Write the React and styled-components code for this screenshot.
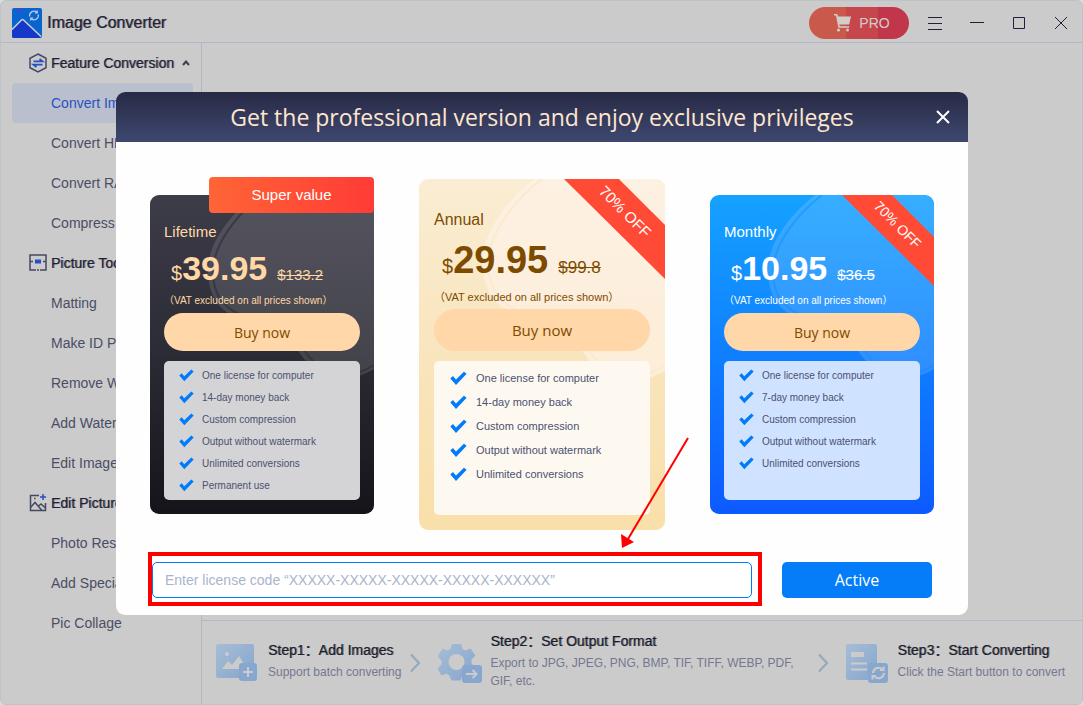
import styled, { createGlobalStyle } from "styled-components";

const GlobalStyle = createGlobalStyle`
  * {
    box-sizing: border-box;
  }

  body {
    margin: 0;
    background-color: #d9dde0;
    font-family: "Liberation Sans", Arial, "Noto Sans CJK SC", sans-serif;
  }

  button,
  input {
    font-family: inherit;
  }
`;

const menuGroups = [
  {
    title: "Feature Conversion",
    icon: "convert",
    open: true,
    items: ["Convert Image", "Convert HEIC", "Convert RAW", "Compress Image"],
  },
  {
    title: "Picture Tools",
    icon: "tools",
    items: [
      "Matting",
      "Make ID Photo",
      "Remove Watermark",
      "Add Watermark",
      "Edit Image",
    ],
  },
  {
    title: "Edit Picture",
    icon: "edit",
    items: ["Photo Restoration", "Add Special Effects", "Pic Collage"],
  },
];

const plans = [
  {
    name: "Lifetime",
    price: "39.95",
    oldPrice: "$133.2",
    tag: "Super value",
    color: "#ffd8a6",
    background: "linear-gradient(#3d3c49, #2b2b35 50%, #15141a)",
    panel: "#d4d4d6",
    shape: "rgba(255, 255, 255, 0.12)",
    line: "rgba(48, 48, 60, 0.7)",
    features: [
      "One license for computer",
      "14-day money back",
      "Custom compression",
      "Output without watermark",
      "Unlimited conversions",
      "Permanent use",
    ],
  },
  {
    name: "Annual",
    price: "29.95",
    oldPrice: "$99.8",
    off: "70% OFF",
    large: true,
    color: "#7d4b00",
    background: "linear-gradient(#faedd3, #f9e5bd 50%, #f9dfa9)",
    panel: "#fef9f0",
    shape: "rgba(255, 244, 236, 0.6)",
    line: "#faebd0",
    features: [
      "One license for computer",
      "14-day money back",
      "Custom compression",
      "Output without watermark",
      "Unlimited conversions",
    ],
  },
  {
    name: "Monthly",
    price: "10.95",
    oldPrice: "$36.5",
    off: "70% OFF",
    color: "#ffffff",
    background: "linear-gradient(#15a2ff, #0f7fff 50%, #0d5aff)",
    panel: "#cfe2ff",
    shape: "rgba(255, 255, 255, 0.14)",
    line: "rgba(20, 140, 255, 0.5)",
    features: [
      "One license for computer",
      "7-day money back",
      "Custom compression",
      "Output without watermark",
      "Unlimited conversions",
    ],
  },
];

// 왼쪽 위 로고
function Logo() {
  return (
    <svg width="30" height="30" viewBox="0 0 30 30">
      <rect width="30" height="30" rx="2" fill="#0865d0" />
      <path d="M2 0h11L7.5 5.5z" fill="#2a55c8" />
      <path d="M0 22.5 11 11.5 29 29 28 30H2a2 2 0 0 1-2-2z" fill="#1638c8" />
      <path
        d="M0 21.5 9.5 12a1.5 1.5 0 0 1 2 0L29 28.5"
        fill="none"
        stroke="#cbd0d8"
        strokeWidth="1.5"
      />
      <path
        d="M17.7 8.5a4.3 4.3 0 0 1 7-4.2M26.3 6.5a4.3 4.3 0 0 1-7 4.2M25.3 2.5v2.5h-2.5M18.7 12.5V10h2.5"
        fill="none"
        stroke="#b9cbe4"
        strokeWidth="1.2"
      />
    </svg>
  );
}

function GroupIcon({ name }) {
  return (
    <svg
      width="18"
      height="20"
      viewBox="0 0 18 20"
      fill="none"
      stroke="#454963"
      strokeWidth="1.5"
    >
      {name === "convert" && (
        <>
          <path d="M9 1 17 5.3v9.4L9 19l-8-4.3V5.3z" />
          <path d="M4.5 8.3h9L10.5 6M13.5 11.7h-9L7.5 14" stroke="#2350c4" strokeWidth="1.8" />
        </>
      )}
      {name === "tools" && (
        <>
          <path d="M7 17H1V2h16v15h-6M8 17h2M1 8.5h3M14 8.5h3" />
          <path d="M6.7 7.2h4.6v2.6H6.7z" fill="#2350c4" stroke="#2350c4" />
        </>
      )}
      {name === "edit" && (
        <>
          <path d="M10 2.5H1.5v15h15V10" />
          <path d="M1.5 14.5 6 9.5l7 8M9.5 13l2.500-2 4.5 4" />
          <path d="M5 5.5h1.5" />
          <path d="M14 1v6M11 4h6" stroke="#2350c4" />
        </>
      )}
    </svg>
  );
}

function CartIcon() {
  return (
    <svg width="17" height="18" viewBox="0 0 17 18" fill="#d3cdca">
      <path d="M0 0h3.2l.8 2.5H17l-1.8 8H5.2l.5 1.7h9.5v1.5H4.4L2 1.5H0z" />
      <circle cx="4.5" cy="16" r="1.5" />
      <circle cx="13.5" cy="16" r="1.5" />
    </svg>
  );
}

function CheckIcon({ size }) {
  return (
    <svg width={size} height={size} viewBox="0 0 15 15">
      <path d="M.3 7.5 2.6 5.2 5.3 8.3 12.3 1.5 14.7 3.4 5.3 13.2z" fill="#007bfa" />
    </svg>
  );
}

// 하단 단계 아이콘
function StepIcon({ name }) {
  return (
    <svg width="44" height="42" viewBox="0 0 44 42">
      <defs>
        <linearGradient id={`step-${name}`} x1="0" x2="1" y1="0" y2="1">
          <stop offset="0" stopColor="#a7bdd5" />
          <stop offset="1" stopColor="#86a6cd" />
        </linearGradient>
      </defs>
      {name === "add" && (
        <>
          <rect y="2" width="38" height="34" rx="2" fill={`url(#step-${name})`} />
          <circle cx="11" cy="12" r="2" fill="#cbcbcb" />
          <path d="M6 27 12 19l4 4 7-9 8 13z" fill="#cbcbcb" />
          <rect x="23" y="21" width="18" height="18" rx="3" fill="#87a7cf" />
          <path d="M32 25v10M27 30h10" stroke="#cbcbcb" strokeWidth="2" />
        </>
      )}
      {name === "format" && (
        <>
          <path
            d="M14 2h9l1.5 5 3 1.5 5-2 5 7-4 4v4l4 4-5 8-5-2-3 2-2 5h-9l-2-5-3-2-5 2-4-7 4-4v-4l-4-4 5-8 5 2 3-1.5z"
            fill={`url(#step-${name})`}
          />
          <circle cx="18.5" cy="20" r="8" fill="#cbcbcb" />
          <rect x="24" y="23" width="20" height="18" rx="3" fill="#87a7cf" />
          <path
            d="M28 32h10M34.5 28l4 4-4 4"
            fill="none"
            stroke="#cbcbcb"
            strokeWidth="2"
          />
        </>
      )}
      {name === "start" && (
        <>
          <rect y="2" width="31" height="36" rx="2" fill={`url(#step-${name})`} />
          <path d="M5 10h13v5H5z" fill="#cbcbcb" />
          <path d="M5 21.5h16M5 27.5h16" stroke="#cbcbcb" strokeWidth="2" />
          <rect x="22" y="21" width="20" height="20" rx="3" fill="#87a7cf" />
          <path
            d="M27 31a5.5 5.5 0 0 1 9-4M38 31a5.5 5.5 0 0 1-9 4M37.5 24.5V28H34M26.5 37.5V34H30"
            fill="none"
            stroke="#cbcbcb"
            strokeWidth="2"
          />
        </>
      )}
    </svg>
  );
}

function StepArrow() {
  return (
    <svg width="10" height="20" viewBox="0 0 10 20">
      <path d="M1 1.5 9 10 1 18.5" fill="none" stroke="#93a8b8" strokeWidth="2" />
    </svg>
  );
}

function PlanCard({ plan }) {
  return (
    <StCard $large={plan.large} $background={plan.background} $color={plan.color}>
      <StCardShape viewBox="0 0 224 319" preserveAspectRatio="none">
        <path
          d="M105 0C80 20 58 48 58 75c0 22 8 38 26 46l55 27c10 6 14 17 25 26 18 14 40 12 60 0V12Q224 0 212 0z"
          fill={plan.shape}
        />
        <path
          d="M112 0C86 20 63 50 63 77c0 20 8 34 26 42l55 27c10 6 14 17 25 26 17 12 37 9 55-2"
          fill="none"
          stroke={plan.line}
          strokeWidth="2"
        />
      </StCardShape>
      {plan.tag && <StTag>{plan.tag}</StTag>}
      {plan.off && (
        <StRibbon $large={plan.large} viewBox="0 0 92 92">
          <path d="M0 0h50l42 42v49z" fill="#ff4a35" />
          <text x="56" y="34" textAnchor="middle" transform="rotate(45 55 29)">
            {plan.off}
          </text>
        </StRibbon>
      )}
      <StPlanName $large={plan.large}>{plan.name}</StPlanName>
      <StPriceRow $large={plan.large}>
        <span>$</span>
        <strong>{plan.price}</strong>
        <del>{plan.oldPrice}</del>
      </StPriceRow>
      <StVat $large={plan.large}>（VAT excluded on all prices shown）</StVat>
      <StBuyButton type="button" $large={plan.large}>
        Buy now
      </StBuyButton>
      <StFeatures $large={plan.large} $panel={plan.panel}>
        {plan.features.map((feature) => (
          <li key={feature}>
            <CheckIcon size={plan.large ? 17 : 15} />
            {feature}
          </li>
        ))}
      </StFeatures>
    </StCard>
  );
}

export default function App() {
  return (
    <>
      <GlobalStyle />
      <StWindow>
        <StTitleBar>
          <Logo />
          <StAppName>Image Converter</StAppName>
          <StProButton type="button">
            <CartIcon />
            PRO
          </StProButton>
          <StWindowButtons>
            <button type="button" aria-label="Menu">
              <svg width="14" height="14" viewBox="0 0 14 14">
                <path d="M0 1.5h14M0 7.5h14M0 13.5h14" />
              </svg>
            </button>
            <button type="button" aria-label="Minimize">
              <svg width="14" height="14" viewBox="0 0 14 14">
                <path d="M0 6.5h14" />
              </svg>
            </button>
            <button type="button" aria-label="Maximize">
              <svg width="14" height="14" viewBox="0 0 14 14">
                <path d="M1.5 1.5h11v11h-11z" />
              </svg>
            </button>
            <button type="button" aria-label="Close">
              <svg width="14" height="14" viewBox="0 0 14 14">
                <path d="M1 1l12 12M13 1 1 13" />
              </svg>
            </button>
          </StWindowButtons>
        </StTitleBar>
        <StBody>
          <StSidebar>
            {menuGroups.map((group) => (
              <div key={group.title}>
                <StGroupTitle>
                  <GroupIcon name={group.icon} />
                  {group.title}
                  {group.open && (
                    <StFoldMark width="8" height="6" viewBox="0 0 8 6">
                      <path d="M1 5 4 1.5 7 5" />
                    </StFoldMark>
                  )}
                </StGroupTitle>
                {group.items.map((item) => (
                  <StMenuItem href="#" key={item} $active={item === "Convert Image"}>
                    {item}
                  </StMenuItem>
                ))}
              </div>
            ))}
          </StSidebar>
          <StContent>
            <StSteps>
              <StepIcon name="add" />
              <StStepText>
                <h3>Step1：Add Images</h3>
                <p>Support batch converting</p>
              </StStepText>
              <StepArrow />
              <StepIcon name="format" />
              <StStepText $wrap>
                <h3>Step2：Set Output Format</h3>
                <p>Export to JPG, JPEG, PNG, BMP, TIF, TIFF, WEBP, PDF, GIF, etc.</p>
              </StStepText>
              <StepArrow />
              <StepIcon name="start" />
              <StStepText>
                <h3>Step3：Start Converting</h3>
                <p>Click the Start button to convert</p>
              </StStepText>
            </StSteps>
          </StContent>
        </StBody>
      </StWindow>

      <StOverlay>
        <StModal role="dialog" aria-labelledby="pro-title">
          <StModalHeader>
            <h2 id="pro-title">Get the professional version and enjoy exclusive privileges</h2>
            <StCloseButton type="button" aria-label="Close dialog">
              <svg width="14" height="14" viewBox="0 0 14 14">
                <path d="M1 1l12 12M13 1 1 13" stroke="#ffffff" strokeWidth="2" />
              </svg>
            </StCloseButton>
          </StModalHeader>
          <StPlans>
            {plans.map((plan) => (
              <PlanCard key={plan.name} plan={plan} />
            ))}
          </StPlans>
          <StLicenseForm onSubmit={(e) => e.preventDefault()}>
            <StLicenseBox>
              <input
                type="text"
                aria-label="License code"
                placeholder="Enter license code “XXXXX-XXXXX-XXXXX-XXXXX-XXXXXX”"
              />
            </StLicenseBox>
            <StActiveButton type="submit">Active</StActiveButton>
          </StLicenseForm>
          {/* 라이선스 입력칸을 가리키는 화살표 */}
          <StPointer width="70" height="112" viewBox="0 0 70 112">
            <path d="M68 1 8 102" stroke="#ff0000" strokeWidth="2" />
            <path d="M1 97 14 105 2 111z" fill="#ff0000" />
          </StPointer>
        </StModal>
      </StOverlay>
    </>
  );
}

const StWindow = styled.div`
  display: flex;
  flex-direction: column;
  min-height: 100vh;
  border: 1px solid #bcc3c9;
  border-radius: 6px;
  background-color: #cbcbcb;
`;

const StTitleBar = styled.header`
  display: flex;
  align-items: center;
  height: 42px;
  padding: 2px 0 0 11px;
  border-bottom: 1px solid #b4b5c6;
`;

const StAppName = styled.h1`
  margin: 0 auto 0 5px;
  color: #1f2033;
  font-size: 16px;
  font-weight: 400;
  text-shadow: 1px 0 rgba(31, 32, 51, 0.5);
`;

const StProButton = styled.button`
  display: flex;
  align-items: center;
  justify-content: center;
  gap: 8px;
  width: 100px;
  height: 32px;
  padding: 0 0 0 6px;
  border: none;
  border-radius: 16px;
  color: #d3cdca;
  font-size: 14px;
  background: linear-gradient(
    90deg,
    #c95a4b 37px,
    #c5464b 37px,
    #c5464b 69px,
    #c2364b 69px
  );
`;

const StWindowButtons = styled.div`
  display: flex;
  margin-left: 5px;

  button {
    display: flex;
    align-items: center;
    justify-content: center;
    width: 42px;
    height: 32px;
    padding: 0;
    border: none;
    background: none;
  }

  svg {
    fill: none;
    stroke: #1f2040;
  }
`;

const StBody = styled.div`
  display: flex;
  flex: 1;
`;

const StSidebar = styled.nav`
  width: 201px;
  padding: 0 8px 0 11px;
  border-right: 1px solid #b4b5c6;
`;

const StGroupTitle = styled.div`
  display: flex;
  align-items: center;
  gap: 4px;
  height: 40px;
  padding-left: 17px;
  color: #1f2033;
  font-size: 14px;
  white-space: nowrap;
  text-shadow: 1px 0 rgba(31, 32, 51, 0.5);
`;

const StFoldMark = styled.svg`
  margin-left: 4px;
  fill: none;
  stroke: #3c3f52;
  stroke-width: 2px;
`;

const StMenuItem = styled.a`
  display: block;
  padding-left: 39px;
  border-radius: 4px;
  color: ${(props) => (props.$active ? "#2a50c4" : "#4a4d66")};
  background-color: ${(props) => (props.$active ? "#b9bfcc" : "transparent")};
  font-size: 14px;
  line-height: 40px;
  text-decoration: none;
`;

const StContent = styled.main`
  display: flex;
  flex: 1;
  flex-direction: column;
  justify-content: flex-end;
`;

const StSteps = styled.footer`
  display: flex;
  align-items: center;
  height: 84px;
  padding: 0 17px 0 14px;
  border-top: 1px solid #b4b9c8;

  svg {
    flex-shrink: 0;
  }
`;

const StStepText = styled.div`
  flex: ${(props) => (props.$wrap ? "1" : "none")};
  margin: 0 9px 8px 8px;

  h3 {
    margin: 0;
    color: #1a1b2c;
    font-size: 14px;
    font-weight: 400;
    line-height: 26px;
    text-shadow: 1px 0 rgba(26, 27, 44, 0.5);
  }

  p {
    margin: 0;
    color: #747890;
    font-size: 12px;
    line-height: 18px;
  }

  & + svg {
    margin-right: 18px;
  }

  &:last-child {
    margin-right: 0;
  }
`;

const StOverlay = styled.div`
  position: fixed;
  inset: 0;
  display: flex;
  align-items: flex-start;
  padding: 92px 115px 0 116px;
`;

const StModal = styled.section`
  position: relative;
  flex: 1;
  overflow: hidden;
  border-radius: 9px;
  background-color: #fefefe;
`;

const StModalHeader = styled.header`
  display: flex;
  align-items: center;
  height: 50px;
  padding-right: 18px;
  background: linear-gradient(#282a45, #3e4870);

  h2 {
    flex: 1;
    margin: 0;
    padding-left: 32px;
    color: #ffe6cf;
    font-family: "Open Sans", "Noto Sans", sans-serif;
    font-size: 23px;
    font-weight: 400;
    text-align: center;
    white-space: nowrap;
  }
`;

const StCloseButton = styled.button`
  display: flex;
  padding: 0;
  border: none;
  background: none;
`;

const StPlans = styled.div`
  display: flex;
  align-items: center;
  justify-content: space-between;
  padding: 37px 34px 22px;
`;

const StCard = styled.article`
  position: relative;
  width: ${(props) => (props.$large ? "246px" : "224px")};
  padding: ${(props) => (props.$large ? "29px 15px 15px" : "25px 14px 14px")};
  border-radius: 9px;
  color: ${(props) => props.$color};
  background: ${(props) => props.$background};
`;

const StCardShape = styled.svg`
  position: absolute;
  top: 0;
  left: 0;
  width: 100%;
  height: 100%;
`;

const StTag = styled.div`
  position: absolute;
  top: -18px;
  right: 0;
  width: 165px;
  border-radius: 4px;
  color: #ffffff;
  font-size: 15px;
  line-height: 36px;
  text-align: center;
  background: linear-gradient(90deg, #ff6536, #ff3b35);
`;

const StRibbon = styled.svg`
  position: absolute;
  top: 0;
  right: 0;
  width: ${(props) => (props.$large ? "101px" : "92px")};

  text {
    fill: #ffffff;
    font-size: 14px;
  }
`;

const StPlanName = styled.h3`
  position: relative;
  margin: 0;
  font-size: ${(props) => (props.$large ? "16px" : "15px")};
  font-weight: 400;
  line-height: 24px;
`;

const StPriceRow = styled.div`
  position: relative;
  display: flex;
  align-items: baseline;
  height: ${(props) => (props.$large ? "56px" : "48px")};
  padding-left: ${(props) => (props.$large ? "8px" : "7px")};
  font-size: 20px;
  line-height: ${(props) => (props.$large ? "56px" : "48px")};

  strong {
    font-size: ${(props) => (props.$large ? "38px" : "34px")};
  }

  del {
    margin-left: 10px;
    font-size: ${(props) => (props.$large ? "17px" : "15px")};
  }
`;

const StVat = styled.p`
  position: relative;
  margin: 2px 0 5px;
  font-size: ${(props) => (props.$large ? "11px" : "10px")};
  line-height: 14px;
  white-space: nowrap;
`;

const StBuyButton = styled.button`
  position: relative;
  display: block;
  width: 100%;
  height: ${(props) => (props.$large ? "42px" : "38px")};
  margin-bottom: 10px;
  padding: 0;
  border: none;
  border-radius: 21px;
  color: #7d4b00;
  font-family: "Open Sans", "Noto Sans", sans-serif;
  font-size: ${(props) => (props.$large ? "15px" : "14px")};
  background-color: #ffd7a8;
`;

const StFeatures = styled.ul`
  position: relative;
  height: ${(props) => (props.$large ? "154px" : "139px")};
  margin: 0;
  padding: ${(props) => (props.$large ? "5px 0 0 16px" : "3px 0 0 15px")};
  border-radius: 5px;
  color: #4b5170;
  background-color: ${(props) => props.$panel};
  list-style: none;

  li {
    display: flex;
    align-items: center;
    gap: ${(props) => (props.$large ? "9px" : "8px")};
    height: ${(props) => (props.$large ? "24px" : "22px")};
    font-size: ${(props) => (props.$large ? "11px" : "10px")};
  }
`;

const StLicenseForm = styled.form`
  display: flex;
  align-items: flex-start;
  gap: 20px;
  padding: 0 36px 9px 32px;
`;

const StLicenseBox = styled.div`
  display: flex;
  flex: 1;
  padding: 6px 6px 4px 0;
  border: 4px solid #ff0000;

  input {
    flex: 1;
    height: 36px;
    padding: 0 12px;
    border: 1px solid #007bfa;
    border-radius: 5px;
    color: #333333;
    background-color: #ffffff;
    font-size: 14px;
    outline: none;
  }

  input::placeholder {
    color: #a9b4cc;
  }
`;

const StActiveButton = styled.button`
  width: 150px;
  height: 36px;
  margin-top: 10px;
  padding: 0;
  border: none;
  border-radius: 5px;
  color: #ffffff;
  font-family: "Open Sans", "Noto Sans", sans-serif;
  font-size: 16px;
  background-color: #057df8;
`;

const StPointer = styled.svg`
  position: absolute;
  top: 345px;
  left: 504px;
`;
